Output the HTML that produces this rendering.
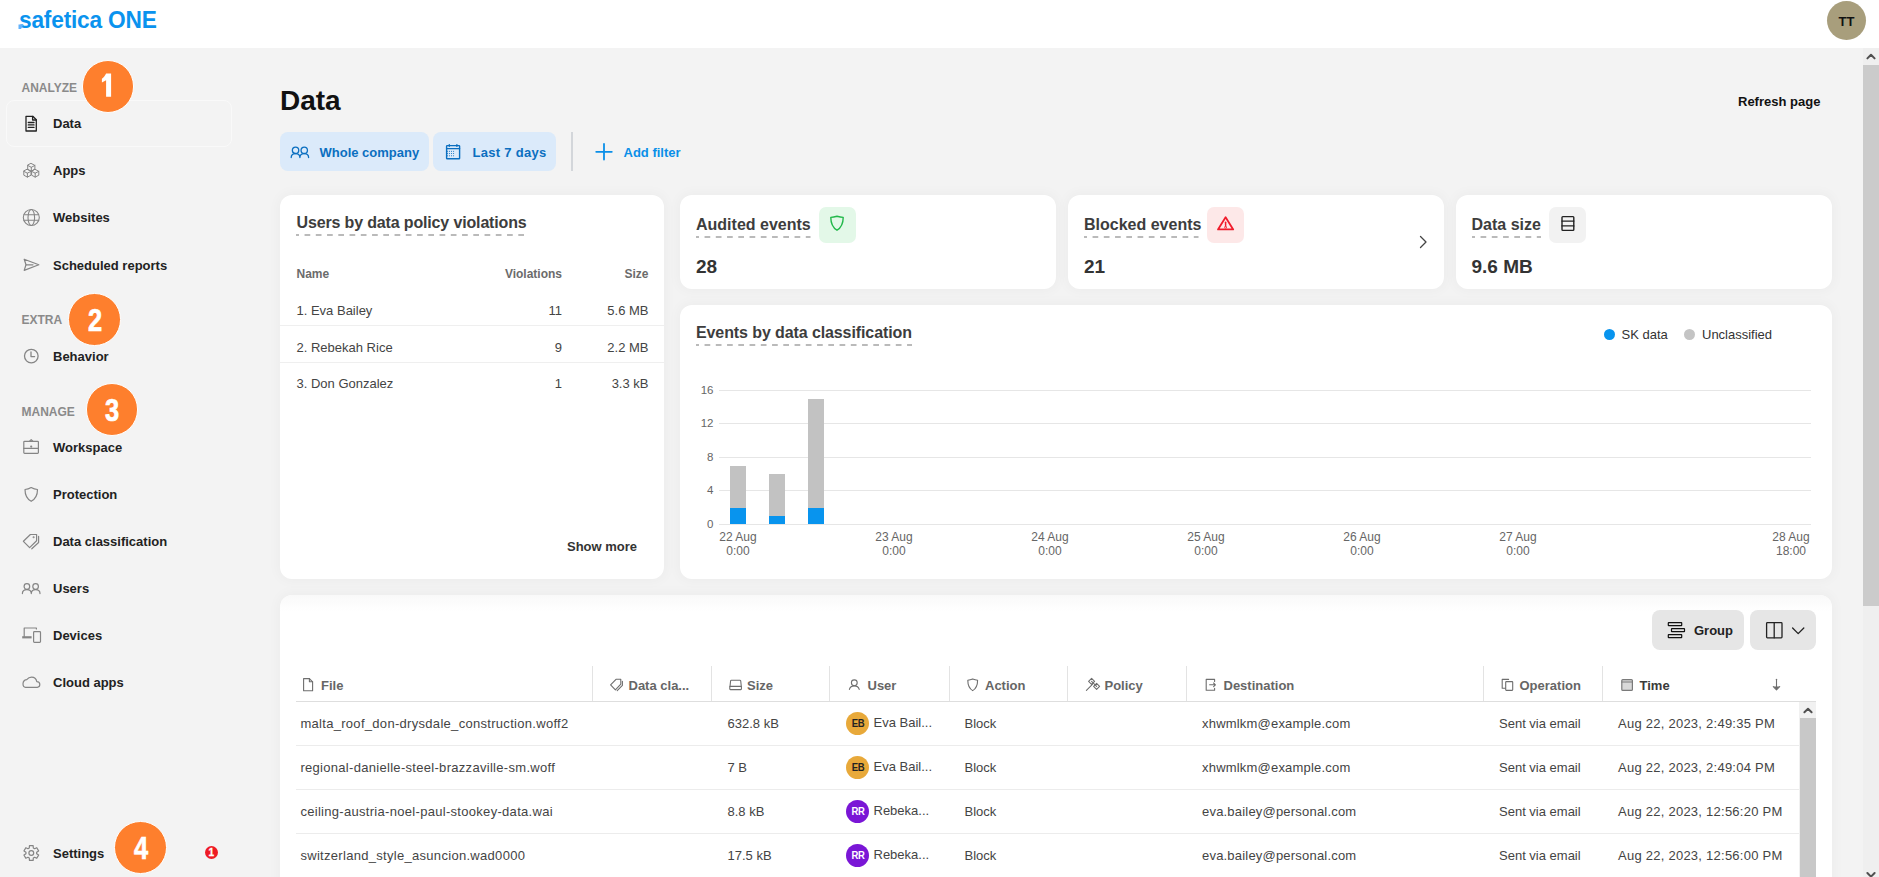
<!DOCTYPE html><html><head><meta charset="utf-8"><style>
html,body{margin:0;padding:0;}
body{width:1879px;height:877px;overflow:hidden;position:relative;background:#f3f3f3;font-family:"Liberation Sans",sans-serif;}
.t{position:absolute;line-height:1;white-space:nowrap;}
.card{position:absolute;background:#fff;border-radius:12px;box-shadow:0 0 12px 3px rgba(0,0,0,0.028);}
</style></head><body>

<div style="position:absolute;left:0px;top:0px;width:1879px;height:48px;background:#fff;"></div>
<div class="t" style="left:18.5px;top:8.28px;font-size:24px;font-weight:bold;color:#0a93ee;transform:scaleX(0.945);transform-origin:0 0;letter-spacing:-0.2px;">safetica ONE</div>
<svg style="position:absolute;left:17px;top:23px;" width="8" height="7" viewBox="0 0 8 7" fill="none"><path d="M1.5 1.5H6.5L4 6H1.5Z" fill="#62b2fb"/></svg>
<div style="position:absolute;left:1827px;top:1px;width:39px;height:39px;background:#a89e7c;border-radius:50%;"></div>
<div class="t" style="left:1646.5px;width:400px;text-align:center;top:15.0px;font-size:13px;font-weight:bold;color:#111;">TT</div>
<div style="position:absolute;left:6px;top:99.5px;width:226px;height:47.5px;border-radius:8px;box-sizing:border-box;border:1px solid rgba(255,255,255,0.5);"></div>
<div class="t" style="left:21.5px;top:81.84px;font-size:12px;font-weight:bold;color:#8a8a8a;">ANALYZE</div>
<div class="t" style="left:21.5px;top:314.24px;font-size:12px;font-weight:bold;color:#8a8a8a;">EXTRA</div>
<div class="t" style="left:21.5px;top:405.54px;font-size:12px;font-weight:bold;color:#8a8a8a;">MANAGE</div>
<div class="t" style="left:53px;top:117.0px;font-size:13px;font-weight:bold;color:#222;">Data</div>
<div class="t" style="left:53px;top:164.2px;font-size:13px;font-weight:bold;color:#222;">Apps</div>
<div class="t" style="left:53px;top:211.4px;font-size:13px;font-weight:bold;color:#222;">Websites</div>
<div class="t" style="left:53px;top:258.5px;font-size:13px;font-weight:bold;color:#222;">Scheduled reports</div>
<div class="t" style="left:53px;top:349.5px;font-size:13px;font-weight:bold;color:#222;">Behavior</div>
<div class="t" style="left:53px;top:441.0px;font-size:13px;font-weight:bold;color:#222;">Workspace</div>
<div class="t" style="left:53px;top:488.0px;font-size:13px;font-weight:bold;color:#222;">Protection</div>
<div class="t" style="left:53px;top:535.0px;font-size:13px;font-weight:bold;color:#222;">Data classification</div>
<div class="t" style="left:53px;top:582.0px;font-size:13px;font-weight:bold;color:#222;">Users</div>
<div class="t" style="left:53px;top:629.0px;font-size:13px;font-weight:bold;color:#222;">Devices</div>
<div class="t" style="left:53px;top:676.0px;font-size:13px;font-weight:bold;color:#222;">Cloud apps</div>
<div class="t" style="left:53px;top:846.7px;font-size:13px;font-weight:bold;color:#222;">Settings</div>
<div style="position:absolute;left:81.75px;top:60.05px;width:50.5px;height:50.5px;border-radius:50%;background:#fe7f2d;border:1px solid #fff;"></div>
<svg style="position:absolute;left:100px;top:72.3px" width="14" height="28" viewBox="0 0 14 28"><path d="M6.1 1.6H11.1V24.8H6.1V8.3L1.9 10.5V6.7C3.6 5.6 5.1 3.8 6.1 1.6Z" fill="#fff"/></svg>
<div style="position:absolute;left:68.45px;top:293.15px;width:50.5px;height:50.5px;border-radius:50%;background:#fe7f2d;border:1px solid #fff;"></div>
<div class="t" style="left:-105.3px;width:400px;text-align:center;top:304.76px;font-size:31px;font-weight:bold;color:#fff;transform:scaleX(0.82);-webkit-text-stroke:0.7px #fff;">2</div>
<div style="position:absolute;left:85.65px;top:383.35px;width:50.5px;height:50.5px;border-radius:50%;background:#fe7f2d;border:1px solid #fff;"></div>
<div class="t" style="left:-88.1px;width:400px;text-align:center;top:394.96px;font-size:31px;font-weight:bold;color:#fff;transform:scaleX(0.82);-webkit-text-stroke:0.7px #fff;">3</div>
<div style="position:absolute;left:114.35px;top:821.15px;width:50.5px;height:50.5px;border-radius:50%;background:#fe7f2d;border:1px solid #fff;"></div>
<div class="t" style="left:-59.400000000000006px;width:400px;text-align:center;top:832.76px;font-size:31px;font-weight:bold;color:#fff;transform:scaleX(0.82);-webkit-text-stroke:0.7px #fff;">4</div>
<div style="position:absolute;left:204.9px;top:846.1px;width:13px;height:13px;border-radius:50%;background:#ee1b24;"></div>
<div class="t" style="left:11.400000000000006px;width:400px;text-align:center;top:847.84px;font-size:10px;font-weight:bold;color:#fff;-webkit-text-stroke:0.3px #fff;">1</div>
<div class="t" style="left:280px;top:87.1px;font-size:28px;font-weight:bold;color:#111;">Data</div>
<div class="t" style="left:1738px;top:94.6px;font-size:13px;font-weight:bold;color:#111;">Refresh page</div>
<div style="position:absolute;left:280px;top:132px;width:149px;height:39px;background:#dbeafa;border-radius:8px;"></div>
<div style="position:absolute;left:433px;top:132px;width:123px;height:39px;background:#dbeafa;border-radius:8px;"></div>
<div style="position:absolute;left:571px;top:132px;width:2px;height:39px;background:#d3d6da;"></div>
<div class="t" style="left:319.5px;top:145.8px;font-size:13px;font-weight:bold;color:#0b6fc0;">Whole company</div>
<div class="t" style="left:472.5px;top:145.8px;font-size:13px;font-weight:bold;color:#0b6fc0;letter-spacing:0.3px;">Last 7 days</div>
<div class="t" style="left:623.5px;top:145.8px;font-size:13px;font-weight:bold;color:#0a8fe8;">Add filter</div>
<div class="card" style="left:280px;top:195px;width:384px;height:384px;"></div>
<div class="card" style="left:680px;top:195px;width:376px;height:94px;"></div>
<div class="card" style="left:1068px;top:195px;width:376px;height:94px;"></div>
<div class="card" style="left:1456px;top:195px;width:376px;height:94px;"></div>
<div class="card" style="left:680px;top:305px;width:1152px;height:274px;"></div>
<div class="card" style="left:280px;top:595px;width:1552px;height:305px;"></div>
<div style="position:absolute;left:280px;top:595px;width:1552px;height:16px;border-radius:12px 12px 0 0;background:linear-gradient(#f9f9f9,rgba(255,255,255,0));"></div>
<div class="t" style="left:296.5px;top:214.66px;font-size:16px;font-weight:bold;color:#3d3d3d;letter-spacing:-0.15px;">Users by data policy violations</div>
<svg style="position:absolute;left:296px;top:234px" width="231" height="2" viewBox="0 0 231 2"><line x1="0" y1="1" x2="231" y2="1" stroke="#bababa" stroke-width="1.8" stroke-dasharray="5.7 5.55" stroke-dashoffset="2.7"/></svg>
<div class="t" style="left:296.5px;top:268.04px;font-size:12px;font-weight:bold;color:#6b6b6b;">Name</div>
<div class="t" style="right:1317px;top:268.04px;font-size:12px;font-weight:bold;color:#6b6b6b;">Violations</div>
<div class="t" style="right:1230.5px;top:268.04px;font-size:12px;font-weight:bold;color:#6b6b6b;">Size</div>
<div class="t" style="left:296.5px;top:303.6px;font-size:13px;font-weight:normal;color:#444;">1. Eva Bailey</div>
<div class="t" style="right:1317px;top:303.6px;font-size:13px;font-weight:normal;color:#444;">11</div>
<div class="t" style="right:1230.5px;top:303.6px;font-size:13px;font-weight:normal;color:#444;">5.6 MB</div>
<div class="t" style="left:296.5px;top:340.6px;font-size:13px;font-weight:normal;color:#444;">2. Rebekah Rice</div>
<div class="t" style="right:1317px;top:340.6px;font-size:13px;font-weight:normal;color:#444;">9</div>
<div class="t" style="right:1230.5px;top:340.6px;font-size:13px;font-weight:normal;color:#444;">2.2 MB</div>
<div class="t" style="left:296.5px;top:377.0px;font-size:13px;font-weight:normal;color:#444;">3. Don Gonzalez</div>
<div class="t" style="right:1317px;top:377.0px;font-size:13px;font-weight:normal;color:#444;">1</div>
<div class="t" style="right:1230.5px;top:377.0px;font-size:13px;font-weight:normal;color:#444;">3.3 kB</div>
<div style="position:absolute;left:280px;top:325px;width:384px;height:1px;background:#efefef;"></div>
<div style="position:absolute;left:280px;top:362px;width:384px;height:1px;background:#efefef;"></div>
<div class="t" style="left:567px;top:539.8px;font-size:13px;font-weight:bold;color:#333;">Show more</div>
<div class="t" style="left:696px;top:216.76px;font-size:16px;font-weight:bold;color:#3d3d3d;">Audited events</div>
<svg style="position:absolute;left:696px;top:236px" width="114.5" height="2" viewBox="0 0 114.5 2"><line x1="0" y1="1" x2="114.5" y2="1" stroke="#bababa" stroke-width="1.8" stroke-dasharray="5.7 5.55" stroke-dashoffset="2.7"/></svg>
<div style="position:absolute;left:818.5px;top:207px;width:37.0px;height:36px;background:#e3f8e8;border-radius:7px;"></div>
<div class="t" style="left:696px;top:256.82px;font-size:19px;font-weight:bold;color:#333;">28</div>
<div class="t" style="left:1084px;top:216.76px;font-size:16px;font-weight:bold;color:#3d3d3d;">Blocked events</div>
<svg style="position:absolute;left:1084px;top:236px" width="114.5" height="2" viewBox="0 0 114.5 2"><line x1="0" y1="1" x2="114.5" y2="1" stroke="#bababa" stroke-width="1.8" stroke-dasharray="5.7 5.55" stroke-dashoffset="2.7"/></svg>
<div style="position:absolute;left:1206.5px;top:207px;width:37.0px;height:36px;background:#fde8e8;border-radius:7px;"></div>
<div class="t" style="left:1084px;top:256.82px;font-size:19px;font-weight:bold;color:#333;">21</div>
<div class="t" style="left:1471.5px;top:216.76px;font-size:16px;font-weight:bold;color:#3d3d3d;">Data size</div>
<svg style="position:absolute;left:1471.5px;top:236px" width="69.5" height="2" viewBox="0 0 69.5 2"><line x1="0" y1="1" x2="69.5" y2="1" stroke="#bababa" stroke-width="1.8" stroke-dasharray="5.7 5.55" stroke-dashoffset="2.7"/></svg>
<div style="position:absolute;left:1549.0px;top:207px;width:37.0px;height:36px;background:#f2f2f2;border-radius:7px;"></div>
<div class="t" style="left:1471.5px;top:256.82px;font-size:19px;font-weight:bold;color:#333;">9.6 MB</div>
<div class="t" style="left:696px;top:325.46px;font-size:16px;font-weight:bold;color:#3d3d3d;letter-spacing:-0.1px;">Events by data classification</div>
<svg style="position:absolute;left:696px;top:344px" width="216" height="2" viewBox="0 0 216 2"><line x1="0" y1="1" x2="216" y2="1" stroke="#bababa" stroke-width="1.8" stroke-dasharray="5.7 5.55" stroke-dashoffset="2.7"/></svg>
<div style="position:absolute;left:1603.5px;top:328.5px;width:11px;height:11px;border-radius:50%;background:#0894ee;"></div>
<div class="t" style="left:1621.5px;top:327.5px;font-size:13px;font-weight:normal;color:#333;">SK data</div>
<div style="position:absolute;left:1684px;top:328.5px;width:11px;height:11px;border-radius:50%;background:#c4c4c4;"></div>
<div class="t" style="left:1702px;top:327.5px;font-size:13px;font-weight:normal;color:#333;">Unclassified</div>
<div style="position:absolute;left:718.5px;top:524.0px;width:1092.5px;height:1.0px;background:#e6e6e6;"></div>
<div class="t" style="right:1165.5px;top:518.97px;font-size:11.5px;font-weight:normal;color:#666;">0</div>
<div style="position:absolute;left:718.5px;top:490.4px;width:1092.5px;height:1.0px;background:#e6e6e6;"></div>
<div class="t" style="right:1165.5px;top:485.37px;font-size:11.5px;font-weight:normal;color:#666;">4</div>
<div style="position:absolute;left:718.5px;top:456.8px;width:1092.5px;height:1.0px;background:#e6e6e6;"></div>
<div class="t" style="right:1165.5px;top:451.77px;font-size:11.5px;font-weight:normal;color:#666;">8</div>
<div style="position:absolute;left:718.5px;top:423.2px;width:1092.5px;height:1.0px;background:#e6e6e6;"></div>
<div class="t" style="right:1165.5px;top:418.17px;font-size:11.5px;font-weight:normal;color:#666;">12</div>
<div style="position:absolute;left:718.5px;top:389.6px;width:1092.5px;height:1.0px;background:#e6e6e6;"></div>
<div class="t" style="right:1165.5px;top:384.57px;font-size:11.5px;font-weight:normal;color:#666;">16</div>
<div style="position:absolute;left:730.25px;top:465.7px;width:15.5px;height:42.0px;background:#c2c2c2;"></div>
<div style="position:absolute;left:730.25px;top:507.7px;width:15.5px;height:16.80000000000001px;background:#0894ee;"></div>
<div style="position:absolute;left:769.25px;top:474.1px;width:15.5px;height:42.0px;background:#c2c2c2;"></div>
<div style="position:absolute;left:769.25px;top:516.1px;width:15.5px;height:8.399999999999977px;background:#0894ee;"></div>
<div style="position:absolute;left:808.25px;top:398.5px;width:15.5px;height:109.19999999999999px;background:#c2c2c2;"></div>
<div style="position:absolute;left:808.25px;top:507.7px;width:15.5px;height:16.80000000000001px;background:#0894ee;"></div>
<div class="t" style="left:538px;width:400px;text-align:center;top:530.84px;font-size:12px;font-weight:normal;color:#666;">22 Aug</div>
<div class="t" style="left:538px;width:400px;text-align:center;top:545.34px;font-size:12px;font-weight:normal;color:#666;">0:00</div>
<div class="t" style="left:694px;width:400px;text-align:center;top:530.84px;font-size:12px;font-weight:normal;color:#666;">23 Aug</div>
<div class="t" style="left:694px;width:400px;text-align:center;top:545.34px;font-size:12px;font-weight:normal;color:#666;">0:00</div>
<div class="t" style="left:850px;width:400px;text-align:center;top:530.84px;font-size:12px;font-weight:normal;color:#666;">24 Aug</div>
<div class="t" style="left:850px;width:400px;text-align:center;top:545.34px;font-size:12px;font-weight:normal;color:#666;">0:00</div>
<div class="t" style="left:1006px;width:400px;text-align:center;top:530.84px;font-size:12px;font-weight:normal;color:#666;">25 Aug</div>
<div class="t" style="left:1006px;width:400px;text-align:center;top:545.34px;font-size:12px;font-weight:normal;color:#666;">0:00</div>
<div class="t" style="left:1162px;width:400px;text-align:center;top:530.84px;font-size:12px;font-weight:normal;color:#666;">26 Aug</div>
<div class="t" style="left:1162px;width:400px;text-align:center;top:545.34px;font-size:12px;font-weight:normal;color:#666;">0:00</div>
<div class="t" style="left:1318px;width:400px;text-align:center;top:530.84px;font-size:12px;font-weight:normal;color:#666;">27 Aug</div>
<div class="t" style="left:1318px;width:400px;text-align:center;top:545.34px;font-size:12px;font-weight:normal;color:#666;">0:00</div>
<div class="t" style="left:1591px;width:400px;text-align:center;top:530.84px;font-size:12px;font-weight:normal;color:#666;">28 Aug</div>
<div class="t" style="left:1591px;width:400px;text-align:center;top:545.34px;font-size:12px;font-weight:normal;color:#666;">18:00</div>
<div style="position:absolute;left:1652px;top:610px;width:92px;height:40px;background:#e6e6e6;border-radius:8px;"></div>
<div class="t" style="left:1694px;top:624.0px;font-size:13px;font-weight:bold;color:#222;">Group</div>
<div style="position:absolute;left:1750px;top:610px;width:66px;height:40px;background:#e6e6e6;border-radius:8px;"></div>
<div style="position:absolute;left:592.2px;top:666px;width:1.0px;height:35px;background:#e3e3e3;"></div>
<div style="position:absolute;left:710.9px;top:666px;width:1.0px;height:35px;background:#e3e3e3;"></div>
<div style="position:absolute;left:828.9px;top:666px;width:1.0px;height:35px;background:#e3e3e3;"></div>
<div style="position:absolute;left:948.7px;top:666px;width:1.0px;height:35px;background:#e3e3e3;"></div>
<div style="position:absolute;left:1067.1px;top:666px;width:1.0px;height:35px;background:#e3e3e3;"></div>
<div style="position:absolute;left:1186.1px;top:666px;width:1.0px;height:35px;background:#e3e3e3;"></div>
<div style="position:absolute;left:1483.2px;top:666px;width:1.0px;height:35px;background:#e3e3e3;"></div>
<div style="position:absolute;left:1601.7px;top:666px;width:1.0px;height:35px;background:#e3e3e3;"></div>
<div style="position:absolute;left:296px;top:700.5px;width:1520px;height:1.5px;background:#dedede;"></div>
<div class="t" style="left:321.0px;top:679.2px;font-size:13px;font-weight:bold;color:#666;">File</div>
<div class="t" style="left:628.5px;top:679.2px;font-size:13px;font-weight:bold;color:#666;">Data cla...</div>
<div class="t" style="left:747.0px;top:679.2px;font-size:13px;font-weight:bold;color:#666;">Size</div>
<div class="t" style="left:867.5px;top:679.2px;font-size:13px;font-weight:bold;color:#666;">User</div>
<div class="t" style="left:985.0px;top:679.2px;font-size:13px;font-weight:bold;color:#666;">Action</div>
<div class="t" style="left:1104.5px;top:679.2px;font-size:13px;font-weight:bold;color:#666;">Policy</div>
<div class="t" style="left:1223.5px;top:679.2px;font-size:13px;font-weight:bold;color:#666;">Destination</div>
<div class="t" style="left:1519.5px;top:679.2px;font-size:13px;font-weight:bold;color:#666;">Operation</div>
<div class="t" style="left:1639.5px;top:679.2px;font-size:13px;font-weight:bold;color:#3a3a3a;">Time</div>
<div class="t" style="left:300.4px;top:717.2px;font-size:13px;font-weight:normal;color:#444;letter-spacing:0.3px;">malta_roof_don-drysdale_construction.woff2</div>
<div class="t" style="left:727.5px;top:717.2px;font-size:13px;font-weight:normal;color:#444;">632.8 kB</div>
<div style="position:absolute;left:846px;top:711.8px;width:23px;height:23px;border-radius:50%;background:#e8a93a;"></div>
<div class="t" style="left:657.5px;width:400px;text-align:center;top:719.44px;font-size:10px;font-weight:bold;color:#222;letter-spacing:-0.4px;transform:scaleX(0.95);">EB</div>
<div class="t" style="left:873.5px;top:716.2px;font-size:13px;font-weight:normal;color:#444;">Eva Bail...</div>
<div class="t" style="left:964.5px;top:717.2px;font-size:13px;font-weight:normal;color:#444;">Block</div>
<div class="t" style="left:1202px;top:717.2px;font-size:13px;font-weight:normal;color:#444;letter-spacing:0.2px;">xhwmlkm@example.com</div>
<div class="t" style="left:1499px;top:717.2px;font-size:13px;font-weight:normal;color:#444;">Sent via email</div>
<div class="t" style="left:1618px;top:717.2px;font-size:13px;font-weight:normal;color:#444;letter-spacing:0.25px;">Aug 22, 2023, 2:49:35 PM</div>
<div style="position:absolute;left:296px;top:745px;width:1503px;height:1px;background:#ececec;"></div>
<div class="t" style="left:300.4px;top:761.2px;font-size:13px;font-weight:normal;color:#444;letter-spacing:0.3px;">regional-danielle-steel-brazzaville-sm.woff</div>
<div class="t" style="left:727.5px;top:761.2px;font-size:13px;font-weight:normal;color:#444;">7 B</div>
<div style="position:absolute;left:846px;top:755.8px;width:23px;height:23px;border-radius:50%;background:#e8a93a;"></div>
<div class="t" style="left:657.5px;width:400px;text-align:center;top:763.44px;font-size:10px;font-weight:bold;color:#222;letter-spacing:-0.4px;transform:scaleX(0.95);">EB</div>
<div class="t" style="left:873.5px;top:760.2px;font-size:13px;font-weight:normal;color:#444;">Eva Bail...</div>
<div class="t" style="left:964.5px;top:761.2px;font-size:13px;font-weight:normal;color:#444;">Block</div>
<div class="t" style="left:1202px;top:761.2px;font-size:13px;font-weight:normal;color:#444;letter-spacing:0.2px;">xhwmlkm@example.com</div>
<div class="t" style="left:1499px;top:761.2px;font-size:13px;font-weight:normal;color:#444;">Sent via email</div>
<div class="t" style="left:1618px;top:761.2px;font-size:13px;font-weight:normal;color:#444;letter-spacing:0.25px;">Aug 22, 2023, 2:49:04 PM</div>
<div style="position:absolute;left:296px;top:789px;width:1503px;height:1px;background:#ececec;"></div>
<div class="t" style="left:300.4px;top:805.2px;font-size:13px;font-weight:normal;color:#444;letter-spacing:0.3px;">ceiling-austria-noel-paul-stookey-data.wai</div>
<div class="t" style="left:727.5px;top:805.2px;font-size:13px;font-weight:normal;color:#444;">8.8 kB</div>
<div style="position:absolute;left:846px;top:799.8px;width:23px;height:23px;border-radius:50%;background:#7a16d6;"></div>
<div class="t" style="left:657.5px;width:400px;text-align:center;top:807.44px;font-size:10px;font-weight:bold;color:#fff;letter-spacing:-0.4px;transform:scaleX(0.95);">RR</div>
<div class="t" style="left:873.5px;top:804.2px;font-size:13px;font-weight:normal;color:#444;">Rebeka...</div>
<div class="t" style="left:964.5px;top:805.2px;font-size:13px;font-weight:normal;color:#444;">Block</div>
<div class="t" style="left:1202px;top:805.2px;font-size:13px;font-weight:normal;color:#444;letter-spacing:0.2px;">eva.bailey@personal.com</div>
<div class="t" style="left:1499px;top:805.2px;font-size:13px;font-weight:normal;color:#444;">Sent via email</div>
<div class="t" style="left:1618px;top:805.2px;font-size:13px;font-weight:normal;color:#444;letter-spacing:0.25px;">Aug 22, 2023, 12:56:20 PM</div>
<div style="position:absolute;left:296px;top:833px;width:1503px;height:1px;background:#ececec;"></div>
<div class="t" style="left:300.4px;top:849.2px;font-size:13px;font-weight:normal;color:#444;letter-spacing:0.3px;">switzerland_style_asuncion.wad0000</div>
<div class="t" style="left:727.5px;top:849.2px;font-size:13px;font-weight:normal;color:#444;">17.5 kB</div>
<div style="position:absolute;left:846px;top:843.8px;width:23px;height:23px;border-radius:50%;background:#7a16d6;"></div>
<div class="t" style="left:657.5px;width:400px;text-align:center;top:851.44px;font-size:10px;font-weight:bold;color:#fff;letter-spacing:-0.4px;transform:scaleX(0.95);">RR</div>
<div class="t" style="left:873.5px;top:848.2px;font-size:13px;font-weight:normal;color:#444;">Rebeka...</div>
<div class="t" style="left:964.5px;top:849.2px;font-size:13px;font-weight:normal;color:#444;">Block</div>
<div class="t" style="left:1202px;top:849.2px;font-size:13px;font-weight:normal;color:#444;letter-spacing:0.2px;">eva.bailey@personal.com</div>
<div class="t" style="left:1499px;top:849.2px;font-size:13px;font-weight:normal;color:#444;">Sent via email</div>
<div class="t" style="left:1618px;top:849.2px;font-size:13px;font-weight:normal;color:#444;letter-spacing:0.25px;">Aug 22, 2023, 12:56:00 PM</div>
<div style="position:absolute;left:1799px;top:702px;width:17px;height:175px;background:#f1f1f1;"></div>
<div style="position:absolute;left:1800px;top:718px;width:16px;height:159px;background:#c8c8c8;"></div>
<div style="position:absolute;left:1863px;top:48px;width:16px;height:829px;background:#efefef;"></div>
<div style="position:absolute;left:1863px;top:65px;width:16px;height:541px;background:#cbcbcb;"></div>
<svg style="position:absolute;left:18px;top:110px" width="30" height="30" viewBox="0 0 30 30" fill="none" stroke="#222" stroke-width="1.3" stroke-linejoin="round" stroke-linecap="round"><path d="M8 6.3H14.8L18.3 9.8V21H8Z"/><path d="M14.6 6.3V10H18.3"/><path d="M10.3 12.5H16M10.3 14.9H16M10.3 17.4H16"/></svg>
<svg style="position:absolute;left:18px;top:157px" width="30" height="30" viewBox="0 0 30 30" fill="none" stroke="#858585" stroke-width="1.0" stroke-linejoin="round" stroke-linecap="round"><path d="M13.3 6.500000000000001L16.900000000000002 8.4V12.3L13.3 14.200000000000001L9.700000000000001 12.3V8.4Z M9.700000000000001 8.4L13.3 10.3L16.900000000000002 8.4 M13.3 10.3V14.200000000000001"/><path d="M9.4 12.399999999999999L13.0 14.299999999999999V18.2L9.4 20.099999999999998L5.800000000000001 18.2V14.299999999999999Z M5.800000000000001 14.299999999999999L9.4 16.2L13.0 14.299999999999999 M9.4 16.2V20.099999999999998"/><path d="M17.2 12.399999999999999L20.8 14.299999999999999V18.2L17.2 20.099999999999998L13.6 18.2V14.299999999999999Z M13.6 14.299999999999999L17.2 16.2L20.8 14.299999999999999 M17.2 16.2V20.099999999999998"/></svg>
<svg style="position:absolute;left:18px;top:204px" width="30" height="30" viewBox="0 0 30 30" fill="none" stroke="#858585" stroke-width="1.1" stroke-linejoin="round" stroke-linecap="round"><circle cx="13.3" cy="13.5" r="8"/><ellipse cx="13.3" cy="13.5" rx="3.3" ry="8"/><path d="M6 10.8H20.6M6 16.2H20.6"/></svg>
<svg style="position:absolute;left:18px;top:251px" width="30" height="30" viewBox="0 0 30 30" fill="none" stroke="#858585" stroke-width="1.2" stroke-linejoin="round" stroke-linecap="round"><path d="M6.2 8.2L20.8 13.8L6.2 19.4L8 13.8Z"/><path d="M8 13.8H15"/></svg>
<svg style="position:absolute;left:18px;top:342px" width="30" height="30" viewBox="0 0 30 30" fill="none" stroke="#858585" stroke-width="1.3" stroke-linejoin="round" stroke-linecap="round"><circle cx="13.3" cy="14.1" r="6.8"/><path d="M13 10V14.6H16.6"/></svg>
<svg style="position:absolute;left:18px;top:434px" width="30" height="30" viewBox="0 0 30 30" fill="none" stroke="#858585" stroke-width="1.2" stroke-linejoin="round" stroke-linecap="round"><rect x="5.8" y="7.3" width="14.6" height="12" rx="0.8"/><path d="M5.8 14.4H20.4"/><path d="M11.6 7.2L13.2 5.6L14.8 7.2"/><circle cx="13.2" cy="12.6" r="0.5"/></svg>
<svg style="position:absolute;left:18px;top:481px" width="30" height="30" viewBox="0 0 30 30" fill="none" stroke="#858585" stroke-width="1.2" stroke-linejoin="round" stroke-linecap="round"><path d="M7 8.5C9.6 8.3 11.3 7.6 13.2 6.5C15.1 7.6 16.8 8.3 19.5 8.5C19.5 14 17.5 18 13.2 20.3C8.9 18 7 14 7 8.5Z"/></svg>
<svg style="position:absolute;left:18px;top:528px" width="30" height="30" viewBox="0 0 30 30" fill="none" stroke="#858585" stroke-width="1.2" stroke-linejoin="round" stroke-linecap="round"><path d="M5.4 13.3L12.4 6.5H18.6V12.8L11.6 19.6Z"/><path d="M20.6 8.4V14.5L13.8 20.8"/><circle cx="15.6" cy="9.2" r="0.4"/></svg>
<svg style="position:absolute;left:18px;top:575px" width="30" height="30" viewBox="0 0 30 30" fill="none" stroke="#858585" stroke-width="1.2" stroke-linejoin="round" stroke-linecap="round"><circle cx="8.9" cy="11.5" r="2.8"/><circle cx="17.6" cy="11.5" r="2.8"/><path d="M4.4 18.6C4.4 16 6.4 14.6 8.9 14.6C11.4 14.6 13.3 16 13.3 18.6C13.3 16 15.2 14.6 17.6 14.6C20.1 14.6 22 16 22 18.6"/></svg>
<svg style="position:absolute;left:18px;top:622px" width="30" height="30" viewBox="0 0 30 30" fill="none" stroke="#858585" stroke-width="1.2" stroke-linejoin="round" stroke-linecap="round"><path d="M6.2 14.6V6H18.4V7"/><path d="M4.2 15.3H13.6" stroke-width="2.2" stroke-linecap="butt"/><rect x="15.6" y="9.7" width="6.9" height="10.7" rx="0.8"/></svg>
<svg style="position:absolute;left:18px;top:669px" width="30" height="30" viewBox="0 0 30 30" fill="none" stroke="#858585" stroke-width="1.2" stroke-linejoin="round" stroke-linecap="round"><path d="M7.5 18.3H19.3C21 18.3 21.8 17 21.8 15.6C21.8 14 20.6 12.6 18.8 12.6C18.2 9.8 16.2 8.2 13.6 8.2C11.4 8.2 9.8 9.3 8.7 10.6C6.8 10.6 5 12.3 5 14.8C5 16.8 6 18.3 7.5 18.3Z"/></svg>
<svg style="position:absolute;left:18px;top:838px" width="30" height="30" viewBox="0 0 30 30" fill="none" stroke="#858585" stroke-width="1.2" stroke-linejoin="round" stroke-linecap="round"><path d="M11.46 7.63L15.14 7.63L15.32 9.99L16.62 10.74L18.77 9.72L20.61 12.91L18.65 14.25L18.65 15.75L20.61 17.09L18.77 20.28L16.62 19.26L15.32 20.01L15.14 22.37L11.46 22.37L11.28 20.01L9.98 19.26L7.83 20.28L5.99 17.09L7.95 15.75L7.95 14.25L5.99 12.91L7.83 9.72L9.98 10.74L11.28 9.99Z"/><circle cx="13.3" cy="15" r="2.4"/></svg>
<svg style="position:absolute;left:286px;top:140px" width="30" height="30" viewBox="0 0 30 30" fill="none" stroke="#0b6fc0" stroke-width="1.3" stroke-linejoin="round" stroke-linecap="round"><circle cx="9.55" cy="10.3" r="3.2"/><circle cx="18.25" cy="10.3" r="3.2"/><path d="M5.2 17.6C5.2 15 7 13.6 9.55 13.6C12.1 13.6 13.9 15 13.9 17.6C13.9 15 15.7 13.6 18.25 13.6C20.8 13.6 22.6 15 22.6 17.6"/></svg>
<svg style="position:absolute;left:440px;top:138px" width="30" height="30" viewBox="0 0 30 30" fill="none" stroke="#0b6fc0" stroke-width="1.4" stroke-linejoin="round" stroke-linecap="round"><rect x="6.6" y="7.6" width="13" height="13.2" rx="0.6"/><path d="M6.6 10.6H19.6M9.3 6.8V8.2M16.9 6.8V8.2"/><g transform="translate(3.5,0)"><circle cx="3.9" cy="13.2" r="0.55" fill="#0b6fc0" stroke="none"/><circle cx="3.9" cy="15.5" r="0.55" fill="#0b6fc0" stroke="none"/><circle cx="3.9" cy="17.799999999999997" r="0.55" fill="#0b6fc0" stroke="none"/><circle cx="5.949999999999999" cy="13.2" r="0.55" fill="#0b6fc0" stroke="none"/><circle cx="5.949999999999999" cy="15.5" r="0.55" fill="#0b6fc0" stroke="none"/><circle cx="5.949999999999999" cy="17.799999999999997" r="0.55" fill="#0b6fc0" stroke="none"/><circle cx="8.0" cy="13.2" r="0.55" fill="#0b6fc0" stroke="none"/><circle cx="8.0" cy="15.5" r="0.55" fill="#0b6fc0" stroke="none"/><circle cx="8.0" cy="17.799999999999997" r="0.55" fill="#0b6fc0" stroke="none"/><circle cx="10.049999999999999" cy="13.2" r="0.55" fill="#0b6fc0" stroke="none"/><circle cx="10.049999999999999" cy="15.5" r="0.55" fill="#0b6fc0" stroke="none"/><circle cx="10.049999999999999" cy="17.799999999999997" r="0.55" fill="#0b6fc0" stroke="none"/></g></svg>
<svg style="position:absolute;left:590px;top:138px" width="30" height="30" viewBox="0 0 30 30" fill="none" stroke="#0a8fe8" stroke-width="1.8" stroke-linejoin="round" stroke-linecap="round"><path d="M14 6V21.5M6.2 13.8H21.8"/></svg>
<svg style="position:absolute;left:816px;top:204px" width="42" height="42" viewBox="0 0 42 42" fill="none" stroke="#22b84a" stroke-width="1.4" stroke-linejoin="round" stroke-linecap="round"><path d="M14.8 13.4C17 13.2 19 12.8 21 12.3C23 12.8 25 13.2 27.2 13.4C27.2 19.6 24.8 23.8 21 26.2C17.2 23.8 14.8 19.6 14.8 13.4Z"/></svg>
<svg style="position:absolute;left:1205px;top:204px" width="42" height="42" viewBox="0 0 42 42" fill="none" stroke="#f01c2c" stroke-width="1.8" stroke-linejoin="round" stroke-linecap="round"><path d="M20.6 13.2L28.2 25.4H13Z"/><path d="M20.6 18.2V21.4" stroke-width="1.5"/><circle cx="20.6" cy="23.3" r="0.4"/></svg>
<svg style="position:absolute;left:1546px;top:204px" width="42" height="42" viewBox="0 0 42 42" fill="none" stroke="#222" stroke-width="1.4" stroke-linejoin="round" stroke-linecap="round"><rect x="16" y="12.6" width="11.8" height="13.8" rx="0.8"/><path d="M16 17.1H27.8M16 21.9H27.8"/></svg>
<svg style="position:absolute;left:1405px;top:228px" width="30" height="30" viewBox="0 0 30 30" fill="none" stroke="#444" stroke-width="1.3" stroke-linejoin="round" stroke-linecap="round"><path d="M15.5 8.5L21 14L15.5 19.5"/></svg>
<svg style="position:absolute;left:298px;top:672px" width="22" height="22" viewBox="0 0 22 22" fill="none" stroke="#6e6e6e" stroke-width="1.1" stroke-linejoin="round" stroke-linecap="round"><path d="M5.6 6.6H11.4L14.6 9.8V18.8H5.6Z"/><path d="M11.4 6.6V9.8H14.6"/></svg>
<svg style="position:absolute;left:606px;top:672px" width="22" height="22" viewBox="0 0 22 22" fill="none" stroke="#6e6e6e" stroke-width="1.1" stroke-linejoin="round" stroke-linecap="round"><path d="M4.6 12.8L10 7.3H14.8V12.2L9.4 17.8Z"/><path d="M16.4 9.2V13.4L11.2 18.6"/></svg>
<svg style="position:absolute;left:724px;top:672px" width="22" height="22" viewBox="0 0 22 22" fill="none" stroke="#6e6e6e" stroke-width="1.1" stroke-linejoin="round" stroke-linecap="round"><path d="M6 14.5L6.6 8.8C6.7 8.4 7 8.3 7.4 8.3H15.9C16.3 8.3 16.6 8.4 16.7 8.8L17.3 14.5"/><rect x="5.8" y="14.4" width="11.6" height="3.2" rx="0.6"/></svg>
<svg style="position:absolute;left:844px;top:672px" width="22" height="22" viewBox="0 0 22 22" fill="none" stroke="#6e6e6e" stroke-width="1.1" stroke-linejoin="round" stroke-linecap="round"><circle cx="10.3" cy="10.8" r="2.9"/><path d="M5.4 17.4C6 15 7.8 13.9 10.3 13.9C12.8 13.9 14.6 15 15.2 17.4"/></svg>
<svg style="position:absolute;left:962px;top:672px" width="22" height="22" viewBox="0 0 22 22" fill="none" stroke="#6e6e6e" stroke-width="1.1" stroke-linejoin="round" stroke-linecap="round"><path d="M5.8 8.2C7.6 8 9 7.6 10.7 6.9C12.4 7.6 13.8 8 15.6 8.2C15.6 13 14 16.6 10.7 18.6C7.4 16.6 5.8 13 5.8 8.2Z"/></svg>
<svg style="position:absolute;left:1082px;top:672px" width="22" height="22" viewBox="0 0 22 22" fill="none" stroke="#6e6e6e" stroke-width="1.1" stroke-linejoin="round" stroke-linecap="round"><path d="M4.4 18.4L10.4 12.4"/><path d="M6.6 9.4L9.6 6.3L12.6 9.3L9.6 12.4Z"/><path d="M11.6 14.4L14.6 11.4L17.6 14.4L14.6 17.4Z"/><path d="M9.6 9.3L14.6 14.3"/></svg>
<svg style="position:absolute;left:1200px;top:672px" width="22" height="22" viewBox="0 0 22 22" fill="none" stroke="#6e6e6e" stroke-width="1.1" stroke-linejoin="round" stroke-linecap="round"><path d="M14.6 9.4V7.4H6.2V18.3H14.6V16.2"/><path d="M9.6 12.8H15.4M13.6 11L15.4 12.8L13.6 14.6"/></svg>
<svg style="position:absolute;left:1496px;top:672px" width="22" height="22" viewBox="0 0 22 22" fill="none" stroke="#6e6e6e" stroke-width="1.1" stroke-linejoin="round" stroke-linecap="round"><path d="M12.6 7.4H6.2V16.3H9.4"/><rect x="9.7" y="9.6" width="7" height="8.8" rx="0.6"/></svg>
<svg style="position:absolute;left:1616px;top:672px" width="22" height="22" viewBox="0 0 22 22" fill="none" stroke="#7a7a7a" stroke-width="1.2" stroke-linejoin="round" stroke-linecap="round"><rect x="5.8" y="7.6" width="10.6" height="10.8" rx="1" fill="#d9d9d9"/><path d="M5.8 10H16.4"/></svg>
<svg style="position:absolute;left:1766px;top:672px" width="22" height="22" viewBox="0 0 22 22" fill="none" stroke="#6e6e6e" stroke-width="1.1" stroke-linejoin="round" stroke-linecap="round"><path d="M10.5 7.2V17.5"/><path d="M7.3 14.6L10.5 17.8L13.7 14.6" fill="#6e6e6e"/></svg>
<svg style="position:absolute;left:1660px;top:614px" width="30" height="30" viewBox="0 0 30 30" fill="none" stroke="#111" stroke-width="1.2" stroke-linejoin="round" stroke-linecap="round"><rect x="8.3" y="8.6" width="13.4" height="3" rx="0.4"/><rect x="11.5" y="14.6" width="13" height="3" rx="0.4"/><rect x="8.3" y="20.6" width="13.4" height="3" rx="0.4"/></svg>
<svg style="position:absolute;left:1756px;top:612px" width="60" height="36" viewBox="0 0 60 36" fill="none" stroke="#222" stroke-width="1.3" stroke-linejoin="round" stroke-linecap="round"><rect x="10.6" y="10.6" width="15.4" height="15.2" rx="0.8"/><path d="M18.2 10.6V25.8"/><path d="M36.6 16L42.2 21.6L47.8 16"/></svg>
<svg style="position:absolute;left:1800px;top:702px" width="16" height="16" viewBox="0 0 16 16" fill="none" stroke="#505050" stroke-width="2" stroke-linejoin="round" stroke-linecap="round"><path d="M4.4 10.2L8 6.8L11.6 10.2"/></svg>
<svg style="position:absolute;left:1863px;top:48px" width="16" height="16" viewBox="0 0 16 16" fill="none" stroke="#505050" stroke-width="2" stroke-linejoin="round" stroke-linecap="round"><path d="M4.4 10.4L8 6.8L11.6 10.4"/></svg>
<svg style="position:absolute;left:1863px;top:866px" width="16" height="16" viewBox="0 0 16 16" fill="none" stroke="#505050" stroke-width="2" stroke-linejoin="round" stroke-linecap="round"><path d="M4.4 7L8 10.6L11.6 7"/></svg>
</body></html>
